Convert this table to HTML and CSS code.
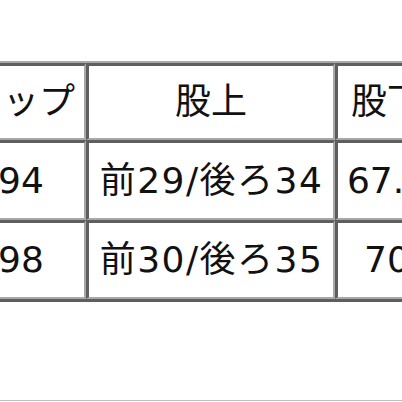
FILE: index.html
```html
<!DOCTYPE html>
<html lang="ja">
<head>
<meta charset="utf-8">
<link rel="stylesheet" href="styles.css">
</head>
<body>
<div class="page">
  <table class="size-table">
    <tr class="row-head">
      <td class="c1">ヒップ</td>
      <td class="c2">股上</td>
      <td class="c3">股下</td>
    </tr>
    <tr class="row-a">
      <td class="c1">94</td>
      <td class="c2 wide">前29/後ろ34</td>
      <td class="c3">67.5</td>
    </tr>
    <tr class="row-b">
      <td class="c1">98</td>
      <td class="c2 wide">前30/後ろ35</td>
      <td class="c3">70</td>
    </tr>
  </table>
  <div class="bottom-line"></div>
</div>
</body>
</html>
```
FILE: styles.css
```css
html, body {
  margin: 0;
  padding: 0;
  background: #ffffff;
}
.page {
  width: 402px;
  height: 402px;
  overflow: hidden;
  position: relative;
  font-family: "DejaVu Sans", "Noto Sans CJK JP", sans-serif;
  color: #111111;
}
.size-table {
  border-collapse: separate;
  border-spacing: 0;
  table-layout: fixed;
  width: 485px;
  margin-top: 61px;
  margin-left: -47px;
  border-top: 2px solid #a8a8a8;
  border-left: 2px solid #a8a8a8;
  border-bottom: 3px solid #5e5e5e;
  border-right: 3px solid #5e5e5e;
}
.size-table td {
  padding: 0;
  text-align: center;
  vertical-align: middle;
  font-size: 36px;
  line-height: 1;
  white-space: nowrap;
  overflow: visible;
  border-top: 3px solid #5e5e5e;
  border-left: 3px solid #5e5e5e;
  border-bottom: 2px solid #a8a8a8;
  border-right: 2px solid #a8a8a8;
  box-sizing: content-box;
}
.size-table td.wide {
  letter-spacing: 1.5px;
  padding-left: 1px;
}
.c1 { width: 126px; }
.c2 { width: 244px; }
.c3 { width: 98px; }
.row-head td { height: 72px; }
.row-a td { height: 75px; }
.row-b td { height: 74px; }
.bottom-line {
  position: absolute;
  left: 0;
  right: 0;
  top: 400px;
  height: 1px;
  background: #bdbdbd;
}
```
